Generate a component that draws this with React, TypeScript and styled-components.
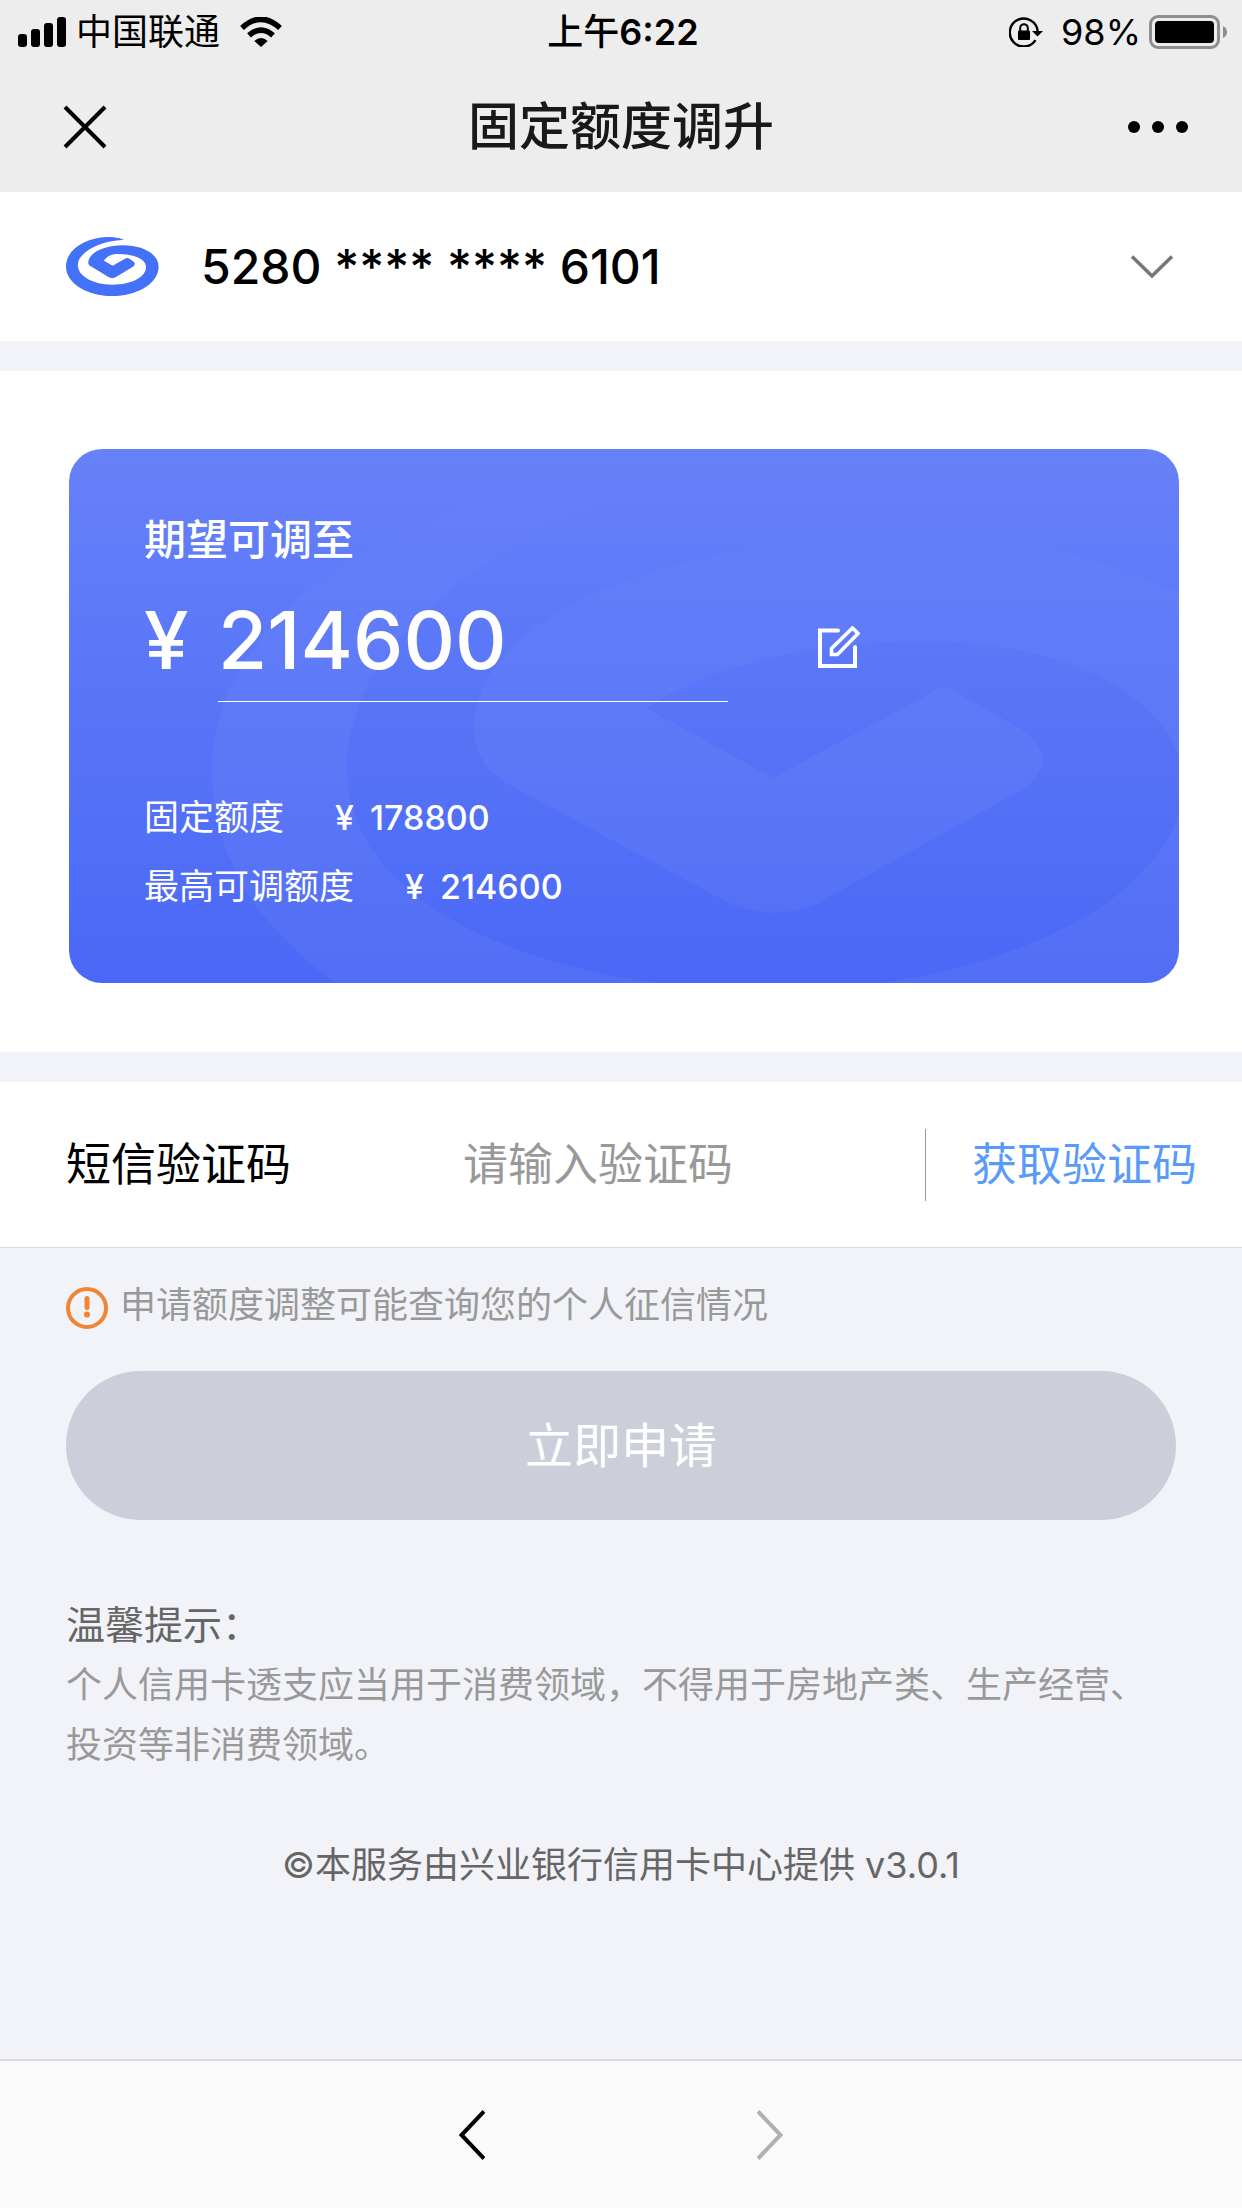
import React, { useState } from "react";
import styled, { createGlobalStyle } from "styled-components";

const GlobalStyle = createGlobalStyle`
  *, *::before, *::after { box-sizing: border-box; }
  body {
    margin: 0;
    background: #f2f3f8;
    color: #000;
    font-family: Inter, "Noto Sans CJK SC", sans-serif;
    font-size: 36px;
  }
  button, input, select {
    font: inherit;
    color: inherit;
    margin: 0;
    padding: 0;
    border: 0;
    border-radius: 0;
    background: none;
    outline: none;
  }
  button { cursor: pointer; }
  svg { display: block; flex: none; }
`;

const Page = styled.div`
  display: flex;
  flex-direction: column;
  min-height: 100vh;
`;

const Header = styled.header`
  background: #ededed;
`;

const StatusBar = styled.div`
  display: grid;
  grid-template-columns: 1fr auto 1fr;
  align-items: center;
  height: 61px;
  padding: 0 14px 0 18px;
  line-height: 64px;
`;

const StatusGroup = styled.div<{ $end?: boolean }>`
  display: flex;
  align-items: center;
  justify-content: ${(p) => (p.$end ? "flex-end" : "flex-start")};
  gap: ${(p) => (p.$end ? 8 : 10)}px;
`;

const Carrier = styled.span`
  margin-right: 10px;
`;

const Battery = styled.span`
  margin-left: 10px;
`;

const Clock = styled.time`
  font-weight: 600;
  span { font-weight: 500; }
`;

const NavBar = styled.div`
  display: grid;
  grid-template-columns: 1fr auto 1fr;
  align-items: center;
  height: 131px;
  padding: 0 54px;
`;

const NavButton = styled.button<{ $end?: boolean }>`
  justify-self: ${(p) => (p.$end ? "end" : "start")};
`;

const CloseButton = styled(NavButton)`
  margin-left: 9px;
`;

const Title = styled.h1`
  margin: 0;
  font-size: 51px;
  line-height: 72px;
  font-weight: 500;
  color: #191919;
`;

const Main = styled.main`
  flex: 1;
`;

const CardPicker = styled.label`
  display: flex;
  align-items: center;
  height: 149px;
  padding: 0 69px 0 66px;
  background: #fff;
`;

const CardSelect = styled.select`
  flex: 1;
  min-width: 0;
  height: 72px;
  margin-left: 42px;
  appearance: none;
  font-size: 48px;
  font-weight: 500;
`;

const LimitSection = styled.section`
  margin: 30px 0;
  padding: 78px 63px 69px 69px;
  background: #fff;
`;

const LimitCard = styled.div`
  position: relative;
  overflow: hidden;
  height: 534px;
  padding: 60px 75px;
  border-radius: 33px;
  background: linear-gradient(#6781f8, #5a77f8 40%, #4a68f6);
  color: #fff;
`;

const Watermark = styled.svg`
  position: absolute;
  inset: 0;
  width: 100%;
  height: 100%;
`;

const LimitBody = styled.div`
  position: relative;
`;

const LimitLabel = styled.label`
  display: block;
  font-size: 42px;
  line-height: 62px;
  font-weight: 500;
`;

const AmountRow = styled.div`
  display: flex;
  align-items: center;
  height: 131px;
  padding-top: 6px;
  font-size: 80px;
  font-weight: 500;
`;

const Currency = styled.span`
  width: 74px;
`;

const AmountInput = styled.input`
  width: 510px;
  height: 125px;
  border-bottom: 1px solid #fff;
`;

const EditButton = styled.button`
  margin: 14px 0 0 90px;
`;

const Facts = styled.dl`
  margin: 81px 0 0;
  font-size: 35px;
  line-height: 69px;
`;

const Fact = styled.div`
  display: flex;
  gap: 51px;
`;

const FactValue = styled.dd`
  display: flex;
  gap: 16px;
  margin: 0;
  font-size: 34px;
  font-weight: 500;
`;

const CodeRow = styled.div`
  display: flex;
  align-items: center;
  height: 166px;
  padding: 0 45px 0 66px;
  border-bottom: 1px solid #d9dade;
  background: #fff;
  font-size: 45px;
  line-height: 72px;
`;

const CodeLabel = styled.label`
  width: 397px;
`;

const CodeInput = styled.input`
  flex: 1;
  min-width: 0;
  height: 72px;
  &::placeholder { color: #999; opacity: 1; }
`;

const CodeButton = styled.button`
  height: 72px;
  padding-left: 46px;
  border-left: 1px solid #999;
  color: #5a9afa;
  white-space: nowrap;
`;

const Content = styled.div`
  padding: 27px 66px 0;
`;

const Notice = styled.p`
  display: flex;
  align-items: flex-end;
  gap: 12px;
  margin: 0 0 36px;
  line-height: 60px;
  color: #999;
  svg { margin-bottom: 6px; }
`;

const SubmitButton = styled.button`
  display: block;
  width: 100%;
  height: 149px;
  border-radius: 75px;
  background: #cccfd9;
  color: #fff;
  font-size: 48px;
  line-height: 149px;
`;

const Tips = styled.section`
  margin-top: 75px;
  color: #999;
  line-height: 60px;
`;

const TipsTitle = styled.h2`
  margin: 0;
  font-size: 39px;
  font-weight: 400;
  color: #666;
`;

const TipsText = styled.p`
  margin: 0;
`;

const Provider = styled.p`
  margin: 60px 0;
  line-height: 60px;
  text-align: center;
  color: #666;
`;

const BrowserBar = styled.nav`
  display: flex;
  align-items: center;
  justify-content: center;
  gap: 272px;
  height: 149px;
  border-top: 2px solid #d9dbe0;
  background: #fafafa;
`;

const SignalIcon = () => (
  <svg width="48" height="30" aria-hidden="true">
    <rect x="0" y="17" width="9" height="13" rx="3" />
    <rect x="13" y="12" width="9" height="18" rx="3" />
    <rect x="26" y="6" width="9" height="24" rx="3" />
    <rect x="39" y="0" width="9" height="30" rx="3" />
  </svg>
);

const WifiIcon = () => (
  <svg width="42" height="30" viewBox="0 0 42 30" aria-hidden="true">
    <path d="M2 11 Q21 -6.500 40 11" fill="none" stroke="#000" strokeWidth="5.600" />
    <path d="M9 18.300 Q21 7.800 33 18.300" fill="none" stroke="#000" strokeWidth="5.600" />
    <path d="M14.300 24 Q21 18 27.700 24 L21 30Z" />
  </svg>
);

const LockIcon = () => (
  <svg width="34" height="30" viewBox="0 0 34 30" aria-hidden="true">
    <path d="M26.500 23.200 A14 14 0 1 1 28.700 14" fill="none" stroke="#000" strokeWidth="2.400" />
    <path d="M23 14 H34 L28.500 19.500Z" />
    <rect x="9" y="13.500" width="12" height="9.500" rx="1" />
    <path d="M11.200 14 V11 a3.800 3.800 0 0 1 7.600 0 V14" fill="none" stroke="#000" strokeWidth="2" />
  </svg>
);

const BatteryIcon = () => (
  <svg width="79" height="34" viewBox="0 0 79 34" aria-hidden="true">
    <rect x="1.500" y="1.500" width="68" height="31" rx="7.500" fill="none" stroke="#8e8e8e" strokeWidth="3" />
    <rect x="6" y="6" width="59" height="22" rx="4" />
    <path d="M74 11 Q78 13 78 17 Q78 21 74 23Z" fill="#8e8e8e" />
  </svg>
);

const CloseIcon = () => (
  <svg width="44" height="44" viewBox="0 0 44 44" fill="none" stroke="#000" strokeWidth="4">
    <path d="M2 2 L42 42 M42 2 L2 42" />
  </svg>
);

const MoreIcon = () => (
  <svg width="60" height="12">
    <circle cx="6" cy="6" r="6" />
    <circle cx="30" cy="6" r="6" />
    <circle cx="54" cy="6" r="6" />
  </svg>
);

const BankLogo = () => (
  <svg width="93" height="59" viewBox="0 0 93 59" fill="#4371f8" role="img" aria-label="兴业银行">
    <path d="M58 2.700 C52 .5 46 0 41 0 C18 1 0 13 0 29.700 C0 46 21 59 46 59 C72 59 92.600 46 92.600 29.700 C92.600 17 77 8.300 57 8.300 C38 8.300 22.300 16 22.300 25.700 C22.300 27 23 28.200 24.400 29 L42.500 40 Q46.300 42.300 50 40 L67.300 29.500 Q70 27 68 25 L63.500 21.700 Q61.400 20.300 59.500 21.500 L46.700 28.700 L37.900 23.700 C41 19 46 17 52 17 C68 17 80 22 80 30 C80 40 66 47.700 46.300 47.700 C27 47.700 11.800 39 11.800 28 C11.800 16 32 4 58 2.700Z" />
  </svg>
);

const ChevronDown = () => (
  <svg width="42" height="24" viewBox="0 0 42 24" fill="none" stroke="#777" strokeWidth="3.600">
    <path d="M1 1.500 L21 21 L41 1.500" />
  </svg>
);

const EditIcon = () => (
  <svg width="42" height="42" viewBox="0 0 42 42" fill="none" stroke="#fff" strokeWidth="4" strokeLinecap="round">
    <path d="M20 4.500 H2 V40 H37 V21" />
    <path d="M13.500 28.500 V22.500 L34.500 2 L40 7.500 L19.500 28.500Z" strokeWidth="3.600" />
  </svg>
);

const WarnIcon = () => (
  <svg width="42" height="42" viewBox="0 0 42 42" fill="none" stroke="#f08535" aria-hidden="true">
    <circle cx="21" cy="21" r="19" strokeWidth="4" />
    <path d="M21 11.500 V20.500" strokeWidth="5" strokeLinecap="round" />
    <circle cx="21" cy="27.500" r="3.100" fill="#f08535" stroke="none" />
  </svg>
);

const BackIcon = () => (
  <svg width="26" height="50" viewBox="0 0 26 50" fill="none" stroke="#000" strokeWidth="4">
    <path d="M25 1.500 L2.500 25 L25 48.500" />
  </svg>
);

const ForwardIcon = () => (
  <svg width="26" height="50" viewBox="0 0 26 50" fill="none" stroke="#b0b0b0" strokeWidth="4">
    <path d="M1 1.500 L23.500 25 L1 48.500" />
  </svg>
);

const facts = [
  { name: "固定额度", value: "178800" },
  { name: "最高可调额度", value: "214600" },
];

export default function App() {
  const [amount, setAmount] = useState("214600");
  const [code, setCode] = useState("");

  return (
    <Page>
      <GlobalStyle />
      <Header>
        <StatusBar>
          <StatusGroup>
            <SignalIcon />
            <Carrier>中国联通</Carrier>
            <WifiIcon />
          </StatusGroup>
          <Clock>
            <span>上午</span>6:22
          </Clock>
          <StatusGroup $end>
            <LockIcon />
            <Battery>98%</Battery>
            <BatteryIcon />
          </StatusGroup>
        </StatusBar>
        <NavBar>
          <CloseButton type="button" aria-label="关闭">
            <CloseIcon />
          </CloseButton>
          <Title>固定额度调升</Title>
          <NavButton type="button" aria-label="更多" $end>
            <MoreIcon />
          </NavButton>
        </NavBar>
      </Header>

      <Main>
        <CardPicker>
          <BankLogo />
          <CardSelect aria-label="信用卡">
            <option>5280 **** **** 6101</option>
          </CardSelect>
          <ChevronDown />
        </CardPicker>

        <LimitSection>
          <LimitCard>
            <Watermark viewBox="69 449 1110 534" preserveAspectRatio="xMaxYMid slice" aria-hidden="true">
              <defs>
                <linearGradient id="sheen" gradientUnits="userSpaceOnUse" x1="0" y1="480" x2="0" y2="760">
                  <stop offset="0" stopColor="#fff" stopOpacity="0" />
                  <stop offset="0.5" stopColor="#fff" stopOpacity="0.025" />
                  <stop offset="1" stopColor="#fff" stopOpacity="0.042" />
                </linearGradient>
              </defs>
              <path
                fill="url(#sheen)"
                d="M335 983 C250 920 212 850 212 770 C212 690 265 615 346 563 C450 495 640 441 874 443
                   C760 450 640 480 560 522 C430 585 347 670 347 770 C347 900 530 990 773 990
                   C1010 990 1183 890 1183 785 C1183 700 1070 641 927 641 C800 641 710 668 646 708
                   L773 778 L944 686 L1021 729 Q1065 760 1021 790 L816 904 Q773 921 731 904
                   L506 783 Q474 762 474 730 C474 620 660 535 927 535 C1030 537 1110 560 1200 602
                   L1300 700 V1100 H400Z"
              />
            </Watermark>
            <LimitBody>
              <LimitLabel htmlFor="amount">期望可调至</LimitLabel>
              <AmountRow>
                <Currency>¥</Currency>
                <AmountInput
                  id="amount"
                  inputMode="numeric"
                  value={amount}
                  onChange={(e) => setAmount(e.target.value)}
                />
                <EditButton type="button" aria-label="修改额度">
                  <EditIcon />
                </EditButton>
              </AmountRow>
              <Facts>
                {facts.map((f) => (
                  <Fact key={f.name}>
                    <dt>{f.name}</dt>
                    <FactValue>
                      <span>¥</span>
                      <span>{f.value}</span>
                    </FactValue>
                  </Fact>
                ))}
              </Facts>
            </LimitBody>
          </LimitCard>
        </LimitSection>

        <CodeRow>
          <CodeLabel htmlFor="code">短信验证码</CodeLabel>
          <CodeInput
            id="code"
            placeholder="请输入验证码"
            value={code}
            onChange={(e) => setCode(e.target.value)}
          />
          <CodeButton type="button">获取验证码</CodeButton>
        </CodeRow>

        <Content>
          <Notice>
            <WarnIcon />
            申请额度调整可能查询您的个人征信情况
          </Notice>
          <SubmitButton type="button">立即申请</SubmitButton>
          <Tips>
            <TipsTitle>温馨提示：</TipsTitle>
            <TipsText>
              个人信用卡透支应当用于消费领域，不得用于房地产类、生产经营、投资等非消费领域。
            </TipsText>
          </Tips>
          <Provider>©本服务由兴业银行信用卡中心提供 v3.0.1</Provider>
        </Content>
      </Main>

      <BrowserBar aria-label="浏览">
        <NavButton type="button" aria-label="后退">
          <BackIcon />
        </NavButton>
        <NavButton type="button" aria-label="前进">
          <ForwardIcon />
        </NavButton>
      </BrowserBar>
    </Page>
  );
}
